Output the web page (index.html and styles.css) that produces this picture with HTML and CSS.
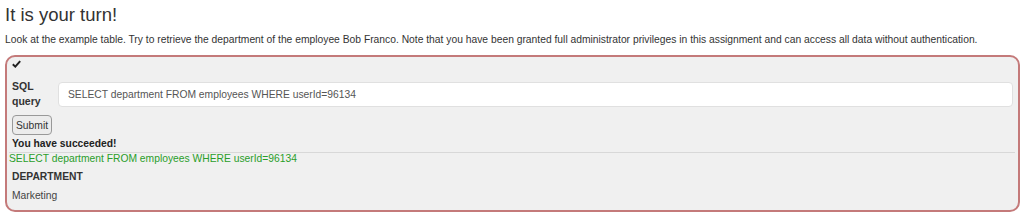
FILE: index.html
```html
<!DOCTYPE html>
<html>
<head>
<meta charset="utf-8">
<link rel="stylesheet" href="styles.css">
</head>
<body>
<div class="page">
  <h2 class="title">It is your turn!</h2>
  <p class="intro">Look at the example table. Try to retrieve the department of the employee Bob Franco. Note that you have been granted full administrator privileges in this assignment and can access all data without authentication.</p>
  <div class="attack">
    <div class="check"><svg width="9" height="8" viewBox="0 0 9 8"><path d="M0.8 4.2 L3.3 6.6 L8.2 1.2" fill="none" stroke="#222" stroke-width="2"/></svg></div>
    <form class="form">
      <div class="row">
        <label class="label">SQL<br>query</label>
        <input class="field" type="text" value="SELECT department FROM employees WHERE userId=96134">
      </div>
      <button class="submit" type="button">Submit</button>
    </form>
    <div class="feedback">You have succeeded!</div>
    <div class="output">
      <div class="query">SELECT department FROM employees WHERE userId=96134</div>
      <table class="result">
        <tr><th>DEPARTMENT</th></tr>
        <tr><td>Marketing</td></tr>
      </table>
    </div>
  </div>
</div>
</body>
</html>
```
FILE: styles.css
```css
html, body { margin: 0; padding: 0; background: #fff; }
body { font-family: "Liberation Sans", Arial, sans-serif; color: #333; font-size: 10.3px; }
.page { padding: 4px 4px 0 5px; }
.title { margin: 0; font-size: 18.5px; font-weight: normal; line-height: 22px; color: #333; }
.intro { margin: 7px 0 0 0; font-size: 10.3px; line-height: 14px; color: #333; }
.attack {
  margin-top: 8px;
  border: 2px solid #c47a7a;
  border-radius: 10px;
  background: #f0f0f0;
  padding: 3px 3px 4px 2px;
  width: 1015px;
  box-sizing: border-box;
}
.check { height: 10px; padding-left: 3px; }
.check svg { display: block; }
.form { margin: 9px 0 0 3px; }
.row { display: flex; align-items: center; gap: 10px; }
.label { font-weight: bold; font-size: 10.5px; line-height: 15px; color: #333; width: 36px; }
.field {
  flex: 1;
  height: 25px;
  box-sizing: border-box;
  border: 1px solid #e0e0e0;
  border-radius: 4px;
  background: #fff;
  font-family: "Liberation Sans", Arial, sans-serif;
  font-size: 10.3px;
  color: #555;
  padding: 0 9px;
  margin-right: 2px;
}
.submit {
  display: block;
  margin: 6px 0 0 0;
  font-family: "Liberation Sans", Arial, sans-serif;
  font-size: 10.3px;
  color: #333;
  background: #ececec;
  border: 1px solid #999;
  border-radius: 4px;
  height: 20px;
  padding: 0 3px;
}
.feedback { font-weight: bold; font-size: 10.3px; line-height: 12px; color: #222; margin: 3px 0 0 3px; }
.output { border-top: 1px solid #d8d8d8; margin-top: 2px; }
.query { color: #2a9e2a; font-size: 10.3px; line-height: 11px; }
.result { border-collapse: collapse; }
.result th { text-align: left; font-size: 10.3px; font-weight: bold; padding: 7px 3px 3px 3px; line-height: 12px; color: #333; }
.result td { font-size: 10.3px; padding: 4px 3px 4px 3px; line-height: 12px; color: #444; }
```
